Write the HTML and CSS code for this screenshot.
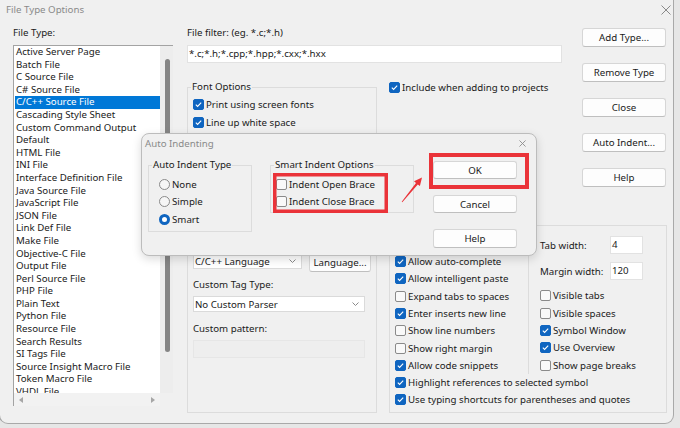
FILE: index.html
```html
<!DOCTYPE html>
<html>
<head>
<meta charset="utf-8">
<title>File Type Options</title>
<link rel="stylesheet" href="styles.css">
</head>
<body>
<div class="window">
  <div class="titlebar">
    <span class="title">File Type Options</span>
    <svg class="xicon" viewBox="0 0 10 10"><path d="M0.5 0.5L9.5 9.5M9.5 0.5L0.5 9.5"/></svg>
  </div>
  <div class="content">
    <div class="types">
      <div class="lbl">File Type:</div>
      <div class="listbox">
        <ul class="items">
          <li>Active Server Page</li>
          <li>Batch File</li>
          <li>C Source File</li>
          <li>C# Source File</li>
          <li class="sel">C/C++ Source File</li>
          <li>Cascading Style Sheet</li>
          <li>Custom Command Output</li>
          <li>Default</li>
          <li>HTML File</li>
          <li>INI File</li>
          <li>Interface Definition File</li>
          <li>Java Source File</li>
          <li>JavaScript File</li>
          <li>JSON File</li>
          <li>Link Def File</li>
          <li>Make File</li>
          <li>Objective-C File</li>
          <li>Output File</li>
          <li>Perl Source File</li>
          <li>PHP File</li>
          <li>Plain Text</li>
          <li>Python File</li>
          <li>Resource File</li>
          <li>Search Results</li>
          <li>SI Tags File</li>
          <li>Source Insight Macro File</li>
          <li>Token Macro File</li>
          <li>VHDL File</li>
        </ul>
        <div class="vscroll"><div class="thumb"></div></div>
        <div class="hscroll"><span class="arr arr-l"></span><span class="arr arr-r"></span></div>
        <div class="corner"></div>
      </div>
    </div>

    <div class="main">
      <div class="top">
        <div class="filter">
          <div class="lbl">File filter: (eg. *.c;*.h)</div>
          <div class="input filter-input">*.c;*.h;*.cpp;*.hpp;*.cxx;*.hxx</div>
          <div class="font-row">
            <fieldset class="grp font-grp">
              <legend>Font Options</legend>
              <div class="rows font-rows">
                <div class="chk"><span class="box on"><svg viewBox="0 0 9 9"><polyline points="1.8,4.6 3.6,6.4 7.2,2.6"/></svg></span><span>Print using screen fonts</span></div>
                <div class="chk"><span class="box on"><svg viewBox="0 0 9 9"><polyline points="1.8,4.6 3.6,6.4 7.2,2.6"/></svg></span><span>Line up white space</span></div>
              </div>
            </fieldset>
            <div class="chk include"><span class="box on"><svg viewBox="0 0 9 9"><polyline points="1.8,4.6 3.6,6.4 7.2,2.6"/></svg></span><span>Include when adding to projects</span></div>
          </div>
        </div>
        <div class="buttons">
          <div class="btn">Add Type...</div>
          <div class="btn">Remove Type</div>
          <div class="btn">Close</div>
          <div class="btn">Auto Indent...</div>
          <div class="btn">Help</div>
        </div>
      </div>

      <div class="bottom">
        <div class="lang-grp">
          <div class="lang-row">
            <div class="select sel1"><span>C/C++ Language</span><svg class="chev" viewBox="0 0 7 4"><polyline points="0.5,0.5 3.5,3.5 6.5,0.5"/></svg></div>
            <div class="btn lang-btn">Language...</div>
          </div>
          <div class="lbl lbl-tag">Custom Tag Type:</div>
          <div class="select sel2"><span>No Custom Parser</span><svg class="chev" viewBox="0 0 7 4"><polyline points="0.5,0.5 3.5,3.5 6.5,0.5"/></svg></div>
          <div class="lbl lbl-pat">Custom pattern:</div>
          <div class="input disabled"></div>
        </div>

        <div class="opt-grp">
          <div class="twocol">
            <div class="lcol">
              <div class="chk"><span class="box on"><svg viewBox="0 0 9 9"><polyline points="1.8,4.6 3.6,6.4 7.2,2.6"/></svg></span><span>Allow auto-complete</span></div>
              <div class="chk"><span class="box on"><svg viewBox="0 0 9 9"><polyline points="1.8,4.6 3.6,6.4 7.2,2.6"/></svg></span><span>Allow intelligent paste</span></div>
              <div class="chk"><span class="box"></span><span>Expand tabs to spaces</span></div>
              <div class="chk"><span class="box on"><svg viewBox="0 0 9 9"><polyline points="1.8,4.6 3.6,6.4 7.2,2.6"/></svg></span><span>Enter inserts new line</span></div>
              <div class="chk"><span class="box"></span><span>Show line numbers</span></div>
              <div class="chk"><span class="box"></span><span>Show right margin</span></div>
              <div class="chk"><span class="box on"><svg viewBox="0 0 9 9"><polyline points="1.8,4.6 3.6,6.4 7.2,2.6"/></svg></span><span>Allow code snippets</span></div>
            </div>
            <div class="sep"></div>
            <div class="rcol">
              <div class="num-row"><span class="num-lbl">Tab width:</span><div class="input num">4</div></div>
              <div class="num-row second"><span class="num-lbl">Margin width:</span><div class="input num">120</div></div>
              <div class="rchecks">
                <div class="chk"><span class="box"></span><span>Visible tabs</span></div>
                <div class="chk"><span class="box"></span><span>Visible spaces</span></div>
                <div class="chk"><span class="box on"><svg viewBox="0 0 9 9"><polyline points="1.8,4.6 3.6,6.4 7.2,2.6"/></svg></span><span>Symbol Window</span></div>
                <div class="chk"><span class="box on"><svg viewBox="0 0 9 9"><polyline points="1.8,4.6 3.6,6.4 7.2,2.6"/></svg></span><span>Use Overview</span></div>
                <div class="chk"><span class="box"></span><span>Show page breaks</span></div>
              </div>
            </div>
          </div>
          <div class="chk"><span class="box on"><svg viewBox="0 0 9 9"><polyline points="1.8,4.6 3.6,6.4 7.2,2.6"/></svg></span><span>Highlight references to selected symbol</span></div>
          <div class="chk"><span class="box on"><svg viewBox="0 0 9 9"><polyline points="1.8,4.6 3.6,6.4 7.2,2.6"/></svg></span><span>Use typing shortcuts for parentheses and quotes</span></div>
        </div>
      </div>
    </div>
  </div>

  <div class="dialog">
    <div class="dlg-title">
      <span>Auto Indenting</span>
      <svg class="dlg-x" viewBox="0 0 8 8"><path d="M0.5 0.5L7.5 7.5M7.5 0.5L0.5 7.5"/></svg>
    </div>
    <div class="dlg-body">
      <fieldset class="grp fs-type">
        <legend>Auto Indent Type</legend>
        <div class="rows radio-rows">
          <div class="chk drow"><span class="radio"></span><span>None</span></div>
          <div class="chk drow"><span class="radio"></span><span>Simple</span></div>
          <div class="chk drow"><span class="radio on"></span><span>Smart</span></div>
        </div>
      </fieldset>
      <fieldset class="grp fs-smart">
        <legend>Smart Indent Options</legend>
        <div class="rows smart-rows">
          <div class="chk drow"><span class="box"></span><span>Indent Open Brace</span></div>
          <div class="chk drow"><span class="box"></span><span>Indent Close Brace</span></div>
        </div>
      </fieldset>
      <div class="dlg-btns">
        <div class="btn dbtn">OK</div>
        <div class="btn dbtn">Cancel</div>
        <div class="btn dbtn tall">Help</div>
      </div>
    </div>
  </div>

  <svg class="marks" viewBox="0 0 673 423">
    <rect x="274.75" y="174.75" width="111.5" height="36.5" />
    <rect x="431" y="155" width="96" height="32" />
    <polygon points="401.7,201.75 416.0,182.9 414.0,181.3 422,177.5 419.9,186.1 417.8,184.5 402.3,202.25" />
  </svg>
</div>
</body>
</html>
```

FILE: styles.css
```css
* { box-sizing: border-box; }
html, body { margin: 0; padding: 0; }
body {
  width: 680px;
  height: 428px;
  overflow: hidden;
  background: #e6e6e6;
  font-family: "Noto Sans", "Open Sans", sans-serif;
  font-size: 9.7px;
  color: #1a1a1a;
}

.window {
  position: relative;
  width: 673px;
  height: 423px;
  background: #f0f0f0;
  border-radius: 0 0 8px 8px;
  box-shadow: 0 0 0 1px #a9a9a9;
  display: flex;
  flex-direction: column;
}

.titlebar {
  height: 20px;
  display: flex;
  align-items: center;
  justify-content: space-between;
  padding: 0 2px 0 6px;
}
.title { color: #8a8a8a; line-height: 20px; }
.xicon { width: 10px; height: 10px; stroke: #8a8a8a; stroke-width: 1; fill: none; }

.content {
  flex: 1;
  display: flex;
  padding: 6px 0 0 13px;
}

.lbl { height: 14px; line-height: 14px; white-space: nowrap; }

/* File type list */
.types { width: 160px; flex: none; }
.listbox {
  margin-top: 5px;
  height: 361px;
  border-top: 1px solid #a3a3a3;
  border-left: 1px solid #a3a3a3;
  display: grid;
  grid-template-columns: 146px 13px;
  grid-template-rows: 347px 13px;
}
.items {
  list-style: none;
  margin: 0;
  padding: 0;
  background: #fff;
  overflow: hidden;
}
.items li {
  height: 12.6px;
  line-height: 12.6px;
  margin-left: 1px;
  padding-left: 1px;
  white-space: nowrap;
}
.items li.sel { background: #0078d7; color: #fff; }
.vscroll { background: #ededed; }
.thumb {
  margin: 13px 0 0 5px;
  width: 5px;
  height: 293px;
  background: #858585;
  border-radius: 3px;
}
.hscroll {
  background: #f2f2f2;
  display: flex;
  align-items: center;
  justify-content: space-between;
  padding: 0 5px 0 5px;
}
.arr { width: 0; height: 0; border-top: 3.5px solid transparent; border-bottom: 3.5px solid transparent; }
.arr-l { border-right: 4px solid #a6a6a6; }
.arr-r { border-left: 4px solid #a6a6a6; }
.corner { background: #f0f0f0; }

/* Main area */
.main { margin-left: 14px; width: 480px; display: flex; flex-direction: column; }
.top { height: 199px; display: flex; }
.filter { width: 375px; flex: none; }
.input {
  background: #fff;
  border: 1px solid #e2e2e2;
  height: 18px;
  line-height: 16px;
  padding-left: 1px;
  white-space: nowrap;
}
.filter-input { margin-top: 5px; }
.font-row { display: flex; align-items: flex-start; margin-top: 17px; }

.grp {
  border: 1px solid #dcdcdc;
  margin: 0;
  padding: 0 4px 0 3px;
  min-width: 0;
}
legend { padding: 0 1px; line-height: 14px; }

.font-grp { width: 190px; height: 110px; flex: none; }
.font-rows { padding: 2.3px 0 0 2px; }
.include { margin-left: 12px; margin-top: -1.6px; }

.chk { display: flex; align-items: center; height: 17.3px; white-space: nowrap; }
.box {
  width: 11px;
  height: 11px;
  border: 1px solid #8a8a8a;
  background: #f9f9f9;
  border-radius: 2px;
  margin-right: 2px;
  flex: none;
  display: flex;
}
.box.on { background: #0f65c0; border-color: #0f65c0; }
.box svg { width: 9px; height: 9px; fill: none; stroke: #fff; stroke-width: 1.1; }

.radio {
  width: 11px;
  height: 11px;
  border-radius: 50%;
  border: 1px solid #8a8a8a;
  background: #f6f6f6;
  margin-right: 2px;
  flex: none;
}
.radio.on { border: 3.5px solid #0f65c0; background: #fff; }

.buttons {
  margin-left: 20px;
  width: 84px;
  flex: none;
  display: flex;
  flex-direction: column;
  gap: 16px;
  padding-top: 2px;
}
.btn {
  height: 19px;
  background: #fdfdfd;
  border: 1px solid #d6d6d6;
  border-bottom-color: #bfbfbf;
  border-radius: 3px;
  display: flex;
  align-items: center;
  justify-content: center;
  white-space: nowrap;
}

/* Bottom groups */
.bottom { display: flex; gap: 12px; height: 188px; }
.lang-grp {
  width: 190px;
  flex: none;
  border: 1px solid #dcdcdc;
  padding: 27px 0 0 5px;
}
.lang-row { display: flex; align-items: flex-start; }
.select {
  height: 16px;
  background: #fff;
  border: 1px solid #dadada;
  display: flex;
  align-items: center;
  justify-content: space-between;
  padding: 0 5px 0 1px;
  white-space: nowrap;
}
.chev { width: 7px; height: 4px; fill: none; stroke: #8a8a8a; stroke-width: 1; }
.sel1 { width: 109px; }
.lang-btn { width: 62px; margin-left: 7px; }
.lbl-tag { margin-top: 6px; }
.sel2 { width: 172px; margin-top: 4px; }
.lbl-pat { margin-top: 10px; }
.disabled { width: 172px; margin-top: 4px; background: #eeeeee; border-color: #e6e6e6; }

.opt-grp {
  width: 278px;
  flex: none;
  border: 1px solid #dcdcdc;
  padding-left: 5px;
}
.twocol { display: flex; height: 148px; }
.lcol { width: 133px; flex: none; padding-top: 27px; }
.sep { width: 1px; background: #dcdcdc; margin-top: 4px; }
.rcol { padding: 10px 0 0 11px; }
.num-row { display: flex; align-items: center; height: 18px; }
.num-row.second { margin-top: 8px; }
.num-lbl { width: 70px; }
.num { width: 33px; padding-left: 1px; }
.rchecks { margin-top: 7.35px; }

/* Dialog */
.dialog {
  position: absolute;
  left: 141px;
  top: 133px;
  width: 396px;
  height: 123px;
  background: #f0f0f0;
  border: 1px solid #bcbcbc;
  border-radius: 8px;
  box-shadow: 0 3px 10px rgba(0, 0, 0, 0.15);
}
.dlg-title {
  height: 18px;
  display: flex;
  align-items: center;
  justify-content: space-between;
  padding: 0 10px 0 3px;
}
.dlg-title span { color: #8a8a8a; }
.dlg-x { width: 7px; height: 7px; fill: none; stroke: #8a8a8a; stroke-width: 1; }
.dlg-body { display: flex; align-items: flex-start; padding: 6px 0 0 6px; }
.fs-type { width: 104px; height: 74px; flex: none; }
.fs-smart { width: 144px; height: 55px; margin-left: 18px; flex: none; }
.radio-rows { padding: 3.25px 0 0 7px; }
.smart-rows { padding: 3.25px 0 0 2px; }
.drow { height: 17.5px; }
.dlg-btns {
  margin-left: 19px;
  margin-top: 3px;
  width: 84px;
  display: flex;
  flex-direction: column;
  gap: 16px;
}
.dbtn { height: 18px; }
.dbtn.tall { height: 19px; }

/* Annotation overlay */
.marks {
  position: absolute;
  left: 0;
  top: 0;
  width: 673px;
  height: 423px;
  pointer-events: none;
}
.marks rect { fill: none; stroke: #ea3339; stroke-width: 3.5; }
.marks rect + rect { stroke-width: 4; }
.marks polygon { fill: #ea3339; }
```
